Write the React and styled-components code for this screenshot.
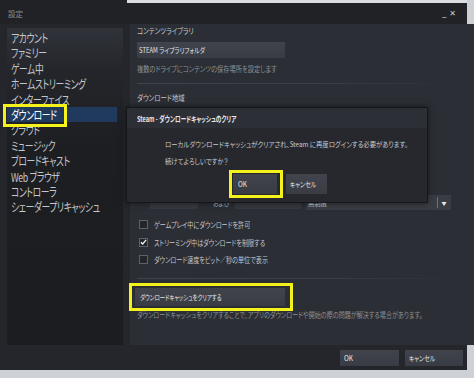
import React from "react";
import styled, { createGlobalStyle } from "styled-components";

const Global = createGlobalStyle`
  html, body { margin: 0; padding: 0; }
  body {
    background: #cdd1d6;
    font-family: "Noto Sans CJK JP", "Noto Sans", sans-serif;
    font-feature-settings: "palt";
  }
`;

const Page = styled.div`
  width: 474px;
  height: 378px;
  overflow: hidden;
  position: relative;
`;

const Window = styled.div`
  width: 467px;
  height: 370px;
  background: #24262b;
  display: flex;
  flex-direction: column;
`;

const TitleBar = styled.div`
  position: relative;
  height: 24px;
  flex: none;
  display: flex;
  align-items: center;
  justify-content: space-between;
  padding: 3px 8px 0 8px;
  box-sizing: border-box;
  background: #202226;
  &::before {
    content: "";
    position: absolute;
    left: 127px;
    right: 0;
    top: 0;
    height: 3px;
    background: #d9dce0;
  }
`;

const TitleText = styled.span`
  font-size: 7.5px;
  color: #8a8e95;
`;

const Controls = styled.div`
  display: flex;
  gap: 3px;
  align-items: center;
  color: #c9ccd1;
  font-family: "DejaVu Sans", sans-serif;
  font-size: 8px;
  margin-right: 3px;
`;

/* horizontally condensed text, as in the reference's UI font */
const Txt = styled.span`
  display: inline-block;
  white-space: nowrap;
  transform: scaleX(${(p) => p.$s || 0.8});
  transform-origin: left center;
`;

const Body = styled.div`
  flex: 1;
  display: flex;
  gap: 7px;
  padding: 0 7px 0 7px;
  min-height: 0;
`;

const Sidebar = styled.nav`
  width: 116px;
  margin-top: 4px;
  background: linear-gradient(#30333a 0px, #24262b 40px, #1c1e22 120px, #1b1d21 100%);
  padding-top: 2px;
  display: flex;
  flex-direction: column;
`;

const NavItem = styled.div`
  position: relative;
  height: 15.4px;
  line-height: 15.4px;
  padding-left: 4px;
  margin-right: 6px;
  font-size: 12px;
  letter-spacing: -0.5px;
  color: ${(p) => (p.$active ? "#ffffff" : "#c3c6cb")};
  background: ${(p) => (p.$active ? "#1f3a5c" : "transparent")};
  white-space: nowrap;
`;

const Highlight = styled.span`
  position: absolute;
  left: ${(p) => p.$l}px;
  top: ${(p) => p.$t}px;
  width: ${(p) => p.$w}px;
  height: ${(p) => p.$h}px;
  border: 3px solid #f4f21a;
  box-sizing: border-box;
  pointer-events: none;
  z-index: 5;
`;

const Main = styled.section`
  position: relative;
  flex: 1;
  background: #2b2e34;
  padding: 0 0 0 7px;
  display: flex;
  flex-direction: column;
`;

const Heading = styled.div`
  font-size: 8px;
  color: #c3c6cc;
  height: 12px;
  line-height: 12px;
  margin-top: ${(p) => p.$mt || 0}px;
`;

const Desc = styled.div`
  font-size: 7.6px;
  color: #8c9198;
  line-height: 11px;
  margin-top: ${(p) => p.$mt || 0}px;
  white-space: nowrap;
`;

const Button = styled.div`
  position: relative;
  width: ${(p) => p.$w}px;
  height: ${(p) => p.$h || 16}px;
  box-sizing: border-box;
  margin-top: ${(p) => p.$mt || 0}px;
  margin-left: ${(p) => p.$ml || 0}px;
  background: linear-gradient(#41444c, #393c43);
  color: #e4e6ea;
  font-size: 7.2px;
  display: flex;
  align-items: center;
  padding-left: ${(p) => p.$pl ?? 4}px;
  white-space: nowrap;
  flex: none;
`;

const Separator = styled.div`
  height: 1px;
  width: 320px;
  margin-top: ${(p) => p.$mt || 0}px;
  background: linear-gradient(90deg, #41444b, #3a3d44 60%, rgba(58, 61, 68, 0));
`;

const RegionBlock = styled.div`
  height: 91px;
`;

const LimitRow = styled.div`
  display: flex;
  align-items: center;
  height: 15px;
`;

const Field = styled.div`
  width: ${(p) => p.$w}px;
  height: 13px;
  margin-left: ${(p) => p.$ml || 0}px;
  background: #363940;
  flex: none;
`;

const Small = styled.span`
  font-size: 7.4px;
  color: #b8bcc2;
  margin-left: ${(p) => p.$ml || 0}px;
  width: 20px;
  flex: none;
`;

const Select = styled.div`
  width: 145px;
  height: 15px;
  margin-left: 5px;
  background: #393c43;
  display: flex;
  align-items: center;
  flex: none;
`;

const SelectLabel = styled.span`
  flex: 1;
  font-size: 7.4px;
  color: #d3d6da;
  padding-left: 2px;
`;

const SelectArrow = styled.span`
  width: 12px;
  height: 11px;
  border-left: 1px solid #6d7179;
  display: flex;
  align-items: center;
  justify-content: center;
  color: #e8eaee;
  font-size: 5px;
  margin-right: 1px;
`;

const CheckList = styled.div`
  display: flex;
  flex-direction: column;
  gap: 8.5px;
  margin-top: 10px;
  padding-left: 2px;
`;

const CheckRow = styled.div`
  display: flex;
  align-items: center;
  gap: 6px;
  height: 9px;
`;

const Box = styled.span`
  width: 9px;
  height: 9px;
  box-sizing: border-box;
  border: 1px solid #5d6168;
  background: #23252a;
  display: flex;
  align-items: center;
  justify-content: center;
  flex: none;
`;

const CheckLabel = styled.span`
  font-size: 7.8px;
  color: #c3c6cc;
  white-space: nowrap;
`;

const Dialog = styled.div`
  position: absolute;
  left: -4px;
  top: 83px;
  width: 300px;
  height: 94px;
  background: #26282d;
  border: 1px solid #15161a;
  box-shadow: 0 0 6px rgba(0, 0, 0, 0.55);
  z-index: 4;
  display: flex;
  flex-direction: column;
`;

const DialogHead = styled.div`
  height: 20px;
  display: flex;
  align-items: center;
  padding-left: 10px;
  background: #2c2f35;
  font-size: 7.8px;
  color: #e6e8eb;
  font-weight: 700;
  flex: none;
`;

const DialogBody = styled.div`
  padding: 7px 0 0 38px;
  display: flex;
  flex-direction: column;
`;

const DialogText = styled.div`
  font-size: 7.4px;
  color: #c6c9ce;
  line-height: 17px;
  white-space: nowrap;
`;

const DialogButtons = styled.div`
  display: flex;
  gap: 9px;
  margin-top: 5px;
  margin-left: 68px;
`;

const Footer = styled.div`
  height: 25px;
  flex: none;
  display: flex;
  justify-content: flex-end;
  align-items: center;
  gap: 6px;
  padding-right: 4px;
  background: #24262b;
`;

const Check = () => (
  <svg width="8" height="8" viewBox="0 0 8 8">
    <path d="M1 4.2 L3.1 6.3 L7 1.6" fill="none" stroke="#f2f3f5" strokeWidth="1.5" />
  </svg>
);

const navItems = [
  "アカウント",
  "ファミリー",
  "ゲーム中",
  "ホームストリーミング",
  "インターフェイス",
  "ダウンロード",
  "クラウド",
  "ミュージック",
  "ブロードキャスト",
  "Web ブラウザ",
  "コントローラ",
  "シェーダープリキャッシュ",
];

const checks = [
  { label: "ゲームプレイ中にダウンロードを許可", on: false },
  { label: "ストリーミング中はダウンロードを制限する", on: true },
  { label: "ダウンロード速度をビット／秒の単位で表示", on: false },
];

export default function App() {
  return (
    <Page>
      <Global />
      <Window>
        <TitleBar>
          <TitleText>設定</TitleText>
          <Controls>
            <span>_</span>
            <span>✕</span>
          </Controls>
        </TitleBar>
        <Body>
          <Sidebar>
            {navItems.map((t) => (
              <NavItem key={t} $active={t === "ダウンロード"}>
                <Txt $s={0.73}>{t}</Txt>
                {t === "ダウンロード" && <Highlight $l={-4} $t={-3} $w={64} $h={23} />}
              </NavItem>
            ))}
          </Sidebar>
          <Main>
            <Heading $mt={1}>
              <Txt $s={0.8}>コンテンツライブラリ</Txt>
            </Heading>
            <Button $w={148} $mt={5} $pl={2}>
              <Txt $s={0.82}>STEAM ライブラリフォルダ</Txt>
            </Button>
            <Desc $mt={5}>
              <Txt $s={0.82}>複数のドライブにコンテンツの保存場所を設定します</Txt>
            </Desc>
            <Separator $mt={9} />
            <Heading $mt={8}>
              <Txt $s={0.8}>ダウンロード地域</Txt>
            </Heading>
            <RegionBlock />
            <LimitRow>
              <Field $w={48} $ml={13} />
              <Small $ml={15}>
                <Txt $s={0.8}>および</Txt>
              </Small>
              <Field $w={66} $ml={2} />
              <Select>
                <SelectLabel>
                  <Txt $s={0.85}>無制限</Txt>
                </SelectLabel>
                <SelectArrow>▼</SelectArrow>
              </Select>
            </LimitRow>
            <CheckList>
              {checks.map((c) => (
                <CheckRow key={c.label}>
                  <Box>{c.on && <Check />}</Box>
                  <CheckLabel>
                    <Txt $s={0.78}>{c.label}</Txt>
                  </CheckLabel>
                </CheckRow>
              ))}
            </CheckList>
            <Separator $mt={14} />
            <Button $w={150} $h={18} $mt={9} $ml={-2} $pl={5}>
              <Txt $s={0.75}>ダウンロードキャッシュをクリアする</Txt>
              <Highlight $l={-6} $t={-5} $w={164} $h={28} />
            </Button>
            <Desc $mt={3}>
              <Txt $s={0.8}>
                ダウンロードキャッシュをクリアすることで、アプリのダウンロードや開始の際の問題が解決する場合があります。
              </Txt>
            </Desc>
            <Dialog>
              <DialogHead>
                <Txt $s={0.72}>Steam - ダウンロードキャッシュのクリア</Txt>
              </DialogHead>
              <DialogBody>
                <DialogText>
                  <Txt $s={0.86}>
                    ローカルダウンロードキャッシュがクリアされ、Steam に再度ログインする必要があります。
                  </Txt>
                </DialogText>
                <DialogText>
                  <Txt $s={0.86}>続けてよろしいですか？</Txt>
                </DialogText>
                <DialogButtons>
                  <Button $w={44} $h={20} $pl={5}>
                    <Txt $s={0.9}>OK</Txt>
                    <Highlight $l={-4} $t={-4} $w={54} $h={28} />
                  </Button>
                  <Button $w={41} $h={20} $pl={4}>
                    <Txt $s={0.8}>キャンセル</Txt>
                  </Button>
                </DialogButtons>
              </DialogBody>
            </Dialog>
          </Main>
        </Body>
        <Footer>
          <Button $w={59} $h={16} $pl={4}>
            <Txt $s={0.9}>OK</Txt>
          </Button>
          <Button $w={58} $h={16} $pl={4}>
            <Txt $s={0.8}>キャンセル</Txt>
          </Button>
        </Footer>
      </Window>
    </Page>
  );
}
